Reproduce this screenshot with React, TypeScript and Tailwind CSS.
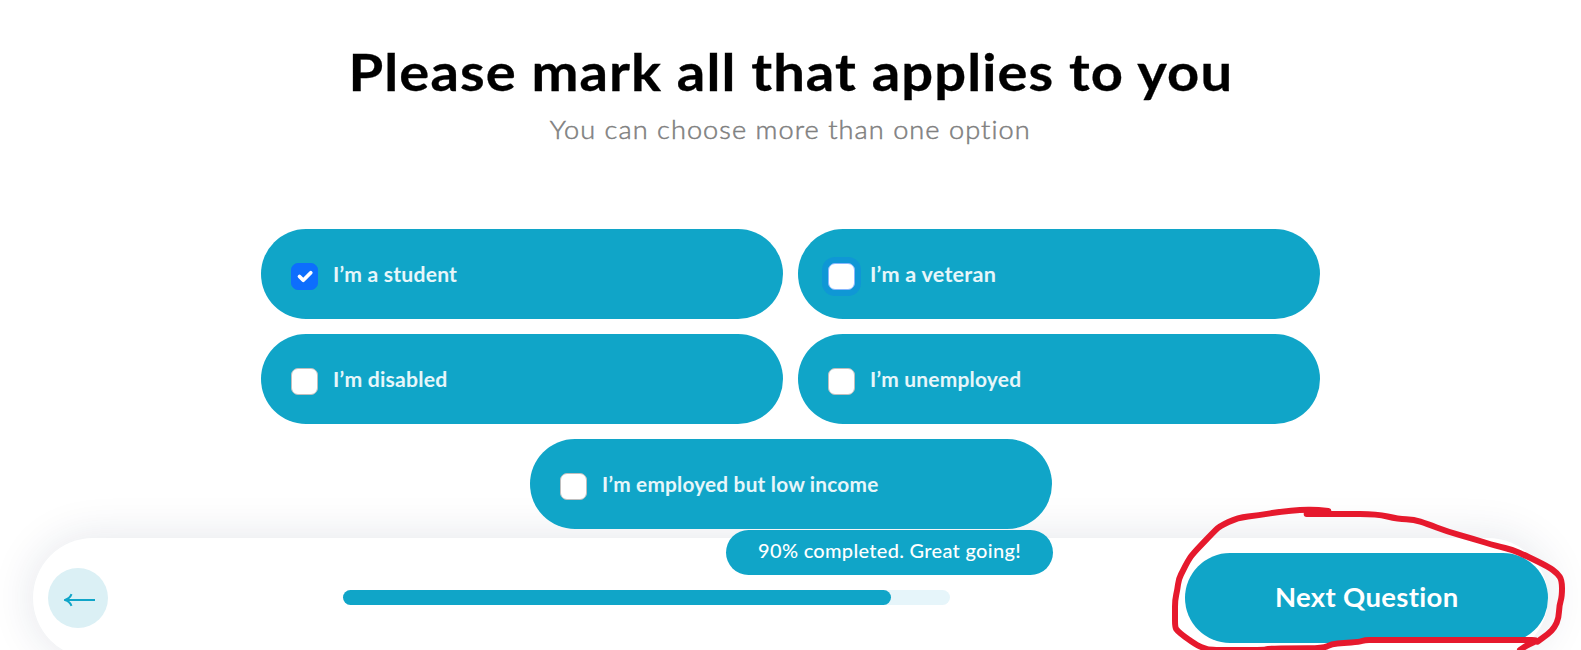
import { useState } from "react";

type Option = { id: string; label: string; stretch: string };
type Point = [number, number];

const OPTIONS: Option[] = [
  { id: "student", label: "I’m a student", stretch: "scale-x-[1.055]" },
  { id: "veteran", label: "I’m a veteran", stretch: "scale-x-[1.08]" },
  { id: "disabled", label: "I’m disabled", stretch: "scale-x-[1.06]" },
  { id: "unemployed", label: "I’m unemployed", stretch: "scale-x-[1.047]" },
  { id: "low-income", label: "I’m employed but low income", stretch: "scale-x-[1.04]" },
];

const LOOP_LEFT: Point[] = [
  [505, 63], [470, 59], [420, 60], [366, 64], [295, 76], [233, 83], [178, 109], [157, 130], [128, 160],
  [95, 196], [83, 214], [70, 240], [56, 267], [52, 300], [45, 330], [45, 370], [45, 412], [52, 422],
  [72, 439], [115, 468], [132, 474], [150, 480], [310, 480], [325, 476], [400, 475], [490, 475],
  [515, 462], [550, 459], [597, 456], [615, 450], [640, 450], [1100, 450], [1132, 450], [1120, 458],
  [1100, 466], [1080, 480],
];
const LOOP_RIGHT: Point[] = [
  [440, 72], [550, 72], [650, 72], [715, 87], [762, 89], [800, 101], [860, 124], [940, 147],
  [1010, 168], [1060, 180], [1095, 196], [1165, 230], [1192, 250], [1206, 270], [1206, 320],
  [1198, 345], [1196, 385], [1184, 412], [1165, 432], [1132, 455],
];

// Joins the segment midpoints with quadratic curves.
function smooth(points: Point[]) {
  let d = `M${points[0][0]} ${points[0][1]}`;
  for (let i = 1; i < points.length - 1; i++) {
    const [x, y] = points[i];
    const [nx, ny] = points[i + 1];
    d += `Q${x} ${y} ${(x + nx) / 2} ${(y + ny) / 2}`;
  }
  const last = points[points.length - 1];
  return `${d}L${last[0]} ${last[1]}`;
}

function OptionPill({ option, checked, focused, onToggle }: {
  option: Option;
  checked: boolean;
  focused: boolean;
  onToggle: () => void;
}) {
  const box = checked
    ? "border-[#0d6efd] bg-[#0d6efd]"
    : focused
      ? "border-[#86b7fe] bg-white ring-[6px] ring-[#0d6efd]/25"
      : "border-[#bfbfbf] bg-white";
  return (
    <button
      type="button"
      role="checkbox"
      aria-checked={checked}
      onClick={onToggle}
      className="flex h-[90px] w-[522px] items-center rounded-full bg-[#10a5c8] pl-[30px] text-left"
    >
      <span className={`mt-[5px] flex size-[27px] shrink-0 items-center justify-center rounded-[7px] border ${box}`}>
        {checked && (
          <svg viewBox="0 0 20 20" className="size-[25px]" fill="none" stroke="#fff" strokeWidth="3" strokeLinecap="round" strokeLinejoin="round">
            <path d="m6 10 3 3 6-6" />
          </svg>
        )}
      </span>
      <span className={`ml-[15px] origin-left pb-px text-[20px] leading-[30px] font-bold tracking-[0.2px] whitespace-nowrap text-white/90 ${option.stretch}`}>
        {option.label}
      </span>
    </button>
  );
}

export default function App() {
  const [selected, setSelected] = useState<string[]>(["student"]);
  const toggle = (id: string) =>
    setSelected((s) => (s.includes(id) ? s.filter((x) => x !== id) : [...s, id]));

  return (
    <div className="relative flex h-[650px] w-[1581px] flex-col overflow-hidden bg-white font-['Lato','Open_Sans',sans-serif]">
      <main className="relative z-10 flex flex-col items-center pt-10">
        <h1 className="scale-x-[1.079] text-[52px] leading-[62px] font-bold tracking-[1px] whitespace-nowrap text-black [-webkit-text-stroke:0.3px_black]">
          Please mark all that applies to you
        </h1>
        <p className="mt-[11px] scale-x-[1.045] text-[26px] leading-8 font-light tracking-[1px] whitespace-nowrap text-[#808080] [-webkit-text-stroke:0.5px_#808080]">
          You can choose more than one option
        </p>
        <div className="mt-[84px] flex w-[1059px] flex-wrap justify-center gap-[15px]">
          {OPTIONS.map((o) => (
            <OptionPill
              key={o.id}
              option={o}
              checked={selected.includes(o.id)}
              focused={o.id === "veteran"}
              onToggle={() => toggle(o.id)}
            />
          ))}
        </div>
      </main>

      <footer className="relative mt-[9px] ml-[33px] flex h-[120px] w-[1515px] shrink-0 items-center rounded-full bg-white pl-[15px] shadow-[0_0_45px_rgba(25,45,80,0.12)]">
        <button type="button" aria-label="Back" className="flex size-[60px] items-center justify-center rounded-full bg-[#dbf0f5] pl-1">
          <svg width="32" height="14" viewBox="0 0 32 14" className="mt-[3px]" fill="none" stroke="#10a5c8" strokeWidth="2">
            <path d="M1 7H31M7.5 1.2C6.5 4 4.5 6 1 7C4.5 8 6.5 10 7.5 12.8" />
          </svg>
        </button>
        <div className="mb-px ml-[235px] h-[15px] w-[607px] rounded-full bg-[#e6f5fa]">
          <div className="h-full w-[548px] rounded-full bg-[#10a5c8]" />
        </div>
        <div className="absolute -top-2 left-[693px] flex h-[45px] w-[327px] items-center justify-center rounded-full bg-[#10a5c8] pb-[5px] text-[20px] font-medium tracking-[0.3px] whitespace-nowrap text-white">
          90% completed. Great going!
        </div>
        <button type="button" className="ml-auto h-[90px] w-[363px] rounded-full bg-[#10a5c8] pb-0.5 text-[26px] font-bold tracking-[0.3px] text-white">
          <span className="inline-block scale-x-[1.058]">Next Question</span>
        </button>
      </footer>

      <svg className="pointer-events-none absolute top-[490px] left-[1160px] z-20" width="421" height="160" viewBox="0 0 1263 480" fill="none" stroke="#e6192d" strokeWidth="18" strokeLinecap="round" strokeLinejoin="round">
        <path d={smooth(LOOP_LEFT)} />
        <path d={smooth(LOOP_RIGHT)} />
      </svg>
    </div>
  );
}
